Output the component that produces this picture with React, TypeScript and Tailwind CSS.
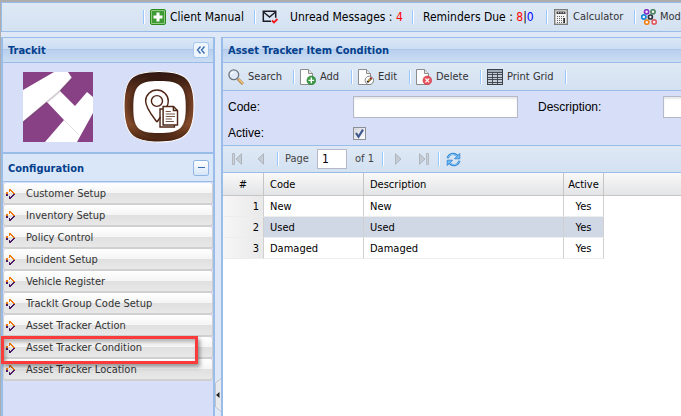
import { useState } from 'react';
import type { ReactNode } from 'react';

const menuItems = [
  'Customer Setup',
  'Inventory Setup',
  'Policy Control',
  'Incident Setup',
  'Vehicle Register',
  'TrackIt Group Code Setup',
  'Asset Tracker Action',
  'Asset Tracker Condition',
  'Asset Tracker Location',
];

const conditions = [
  { id: 1, code: 'New', description: 'New', active: 'Yes' },
  { id: 2, code: 'Used', description: 'Used', active: 'Yes' },
  { id: 3, code: 'Damaged', description: 'Damaged', active: 'Yes' },
];

/* ---------- icons ---------- */

function PlusIcon() {
  return (
    <svg className="w-4 h-4 shrink-0" viewBox="0 0 16 16">
      <rect x="0.5" y="0.5" width="15" height="15" rx="1.5" fill="#8fca80" stroke="#2a8a1c" />
      <rect x="2" y="2" width="12" height="12" fill="#3f9a35" />
      <path d="M6.5 3.5h3v3h3v3h-3v3h-3v-3h-3v-3h3z" fill="#fff" />
    </svg>
  );
}

function MailIcon() {
  return (
    <svg className="w-4 h-4 shrink-0" viewBox="0 0 16 16" fill="none">
      <path d="M9 12.2H1.3V2.3h12.4v6.4" stroke="#1c1c24" strokeWidth="1.5" />
      <path d="M1.5 3l6 5 6-5" stroke="#1c1c24" strokeWidth="1.4" />
      <path d="M10 11.5l2 2 3.5-3.5" stroke="#f01818" strokeWidth="1.8" />
    </svg>
  );
}

function CalculatorIcon() {
  return (
    <svg className="w-[14px] h-4 shrink-0" viewBox="0 0 14 16">
      <rect x="0.7" y="0.7" width="12.6" height="14.6" fill="#f4f4f4" stroke="#7d7d7d" strokeWidth="1.4" />
      <rect x="2.5" y="2.5" width="9" height="2.5" fill="#444" />
      <path d="M4 3.7h1M6.5 3.7h1M9 3.7h1" stroke="#ddd" />
      <path d="M3 7.5h8M3 9.5h8M3 11.5h8M3 13.5h8" stroke="#666" strokeDasharray="1 1" />
      <path d="M10.2 9v5" stroke="#222" strokeWidth="1.5" />
    </svg>
  );
}

function ModulesIcon() {
  return (
    <svg className="w-4 h-4 shrink-0" viewBox="0 0 16 16" fill="#f4f7fb" strokeWidth="1.7">
      <circle cx="5.6" cy="2.8" r="2.1" stroke="#8a2fc4" />
      <circle cx="12" cy="2.8" r="2.1" stroke="#4d8560" />
      <circle cx="2.8" cy="8" r="2.1" stroke="#1686d8" />
      <circle cx="13.2" cy="13" r="2.1" stroke="#e05a62" />
      <circle cx="5.8" cy="13.2" r="2.1" stroke="#f08418" />
      <circle cx="9.4" cy="8" r="2" stroke="#30343c" />
    </svg>
  );
}

function SearchIcon() {
  return (
    <svg className="w-4 h-4 shrink-0" viewBox="0 0 16 16" fill="none">
      <path d="M10 10l5 5" stroke="#a98352" strokeWidth="3" />
      <path d="M10.8 10.4l4.2 4.2" stroke="#f0c078" strokeWidth="1.5" />
      <circle cx="5.8" cy="5.8" r="4.9" fill="#dfe9f7" stroke="#6d7480" strokeWidth="1.3" />
      <path d="M3 5.5a3 3 0 0 1 2.5-2.7" stroke="#fff" strokeWidth="1.2" />
    </svg>
  );
}

function PageIcon({ children }: { children: ReactNode }) {
  return (
    <svg className="w-4 h-4 shrink-0" viewBox="0 0 16 16" fill="none">
      <path d="M0.5 0.5h8l4 4v11h-12z" fill="#fdfdfd" stroke="#808080" strokeWidth="0.9" />
      <path d="M8.5 0.5v4h4" fill="#e6e6e6" stroke="#808080" strokeWidth="0.9" />
      {children}
    </svg>
  );
}

function AddIcon() {
  return (
    <PageIcon>
      <circle cx="11.3" cy="11.4" r="4.4" fill="#3d9b48" stroke="#2c7c38" strokeWidth="0.6" />
      <path d="M11.3 8.6v5.6M8.5 11.4h5.6" stroke="#fff" strokeWidth="1.4" />
    </PageIcon>
  );
}

function EditIcon() {
  return (
    <PageIcon>
      <circle cx="11.3" cy="11.4" r="4.2" fill="#fff" stroke="#777" strokeWidth="0.9" />
      <path d="M9.3 13.4l4.2-4.4" stroke="#222" strokeWidth="2" />
      <path d="M10.2 12.2l2.2-2.3" stroke="#f0b030" strokeWidth="1.2" />
      <path d="M12.8 9.6l0.9-0.9" stroke="#d03030" strokeWidth="2" />
    </PageIcon>
  );
}

function DeleteIcon() {
  return (
    <PageIcon>
      <circle cx="11.3" cy="11.4" r="4.3" fill="#e8525c" stroke="#c83c48" strokeWidth="0.7" />
      <path d="M9.4 9.5l3.8 3.8M13.2 9.5l-3.8 3.8" stroke="#fff" strokeWidth="1.1" />
    </PageIcon>
  );
}

function GridIcon() {
  return (
    <svg className="w-4 h-4 shrink-0" viewBox="0 0 16 16">
      <rect x="0.5" y="0.5" width="15" height="15" fill="#c3ccd9" stroke="#3c4048" />
      <rect x="1" y="1" width="14" height="2.5" fill="#a0aab8" />
      <path d="M1 3.5h14M1 5.5h14M1 8.5h14M1 10.5h14M1 13.5h14M5.5 4v11M10.5 4v11" stroke="#3c4048" strokeWidth="0.9" />
    </svg>
  );
}

function ArrowIcon() {
  return (
    <svg className="w-[9px] h-3 shrink-0" viewBox="0 0 9 12" shapeRendering="crispEdges">
      <path d="M0 4h2v2H0zM3 1h2v1h1v1h1v1h1v1h1v1H7V5H6V4H5V3H4v1H3z" fill="#f0790c" />
      <path d="M0 6h2v2H0zM9 6v1H8v1H7v1H6v1H5v1H3V8h1v1h1V8h1V7h1V6z" fill="#4b1c66" />
    </svg>
  );
}

function PagerIcon({ back, edge }: { back?: boolean; edge?: boolean }) {
  return (
    <svg className={back ? 'w-3 h-3' : 'w-3 h-3 rotate-180'} viewBox="0 0 12 12">
      {edge && <path d="M1.5 0.5h2v11h-2z" fill="#ccd2da" stroke="#a8afb8" strokeWidth="0.8" />}
      <path d="M10.5 0.8v10.4L5 6z" fill="#c6ccd4" stroke="#a4abb5" strokeWidth="0.8" />
    </svg>
  );
}

function RefreshIcon() {
  return (
    <svg className="w-[15px] h-[15px]" viewBox="0 0 15 15" fill="none">
      <path d="M1.6 6.2C2.8 1.6 8 0.4 11.4 3.8" stroke="#2f86d6" strokeWidth="2.2" />
      <path d="M2 5.6C3.4 2 7.8 1.2 11 4" stroke="#a4d6fb" strokeWidth="0.9" />
      <path d="M13.8 1.4v5.4H8.4z" fill="#6fbcf5" stroke="#2f7fd0" strokeWidth="0.8" />
      <path d="M13.4 8.8c-1.2 4.6-6.4 5.8-9.8 2.4" stroke="#2f86d6" strokeWidth="2.2" />
      <path d="M13 9.4c-1.4 3.6-5.8 4.4-9 1.6" stroke="#a4d6fb" strokeWidth="0.9" />
      <path d="M1.2 13.6V8.2h5.4z" fill="#6fbcf5" stroke="#2f7fd0" strokeWidth="0.8" />
    </svg>
  );
}

function CompanyLogo() {
  return (
    <svg className="w-[70px] h-[70px]" viewBox="0 0 70 70">
      <rect width="70" height="70" fill="#884185" />
      <path d="M0 18L31 0h14l4 6L37 19l15 15 12-14 6 5v16L54 70H22l19-22-17-18L0 50z" fill="#fff" />
      <path d="M24 30l13-11" stroke="#d4d0d6" strokeWidth="2" />
      <path d="M41 48l14 14" stroke="#e2dfe4" />
      <path d="M49 6L37 19M24 30L0 50" stroke="#61305f" strokeWidth="1.2" opacity="0.6" />
    </svg>
  );
}

function LocationLogo() {
  return (
    <svg className="w-[72px] h-[74px]" viewBox="1 0 70 74" preserveAspectRatio="none" fill="none">
      <defs>
        <linearGradient id="frame" x1="0" y1="0" x2="0" y2="1">
          <stop offset="0" stopColor="#2c1610" />
          <stop offset="0.35" stopColor="#6d3b22" />
          <stop offset="0.75" stopColor="#824a2a" />
          <stop offset="1" stopColor="#43200f" />
        </linearGradient>
        <radialGradient id="glow">
          <stop offset="0.65" stopColor="#140805" />
          <stop offset="1" stopColor="#140805" stopOpacity="0" />
        </radialGradient>
      </defs>
      <path d="M36 1.5C62 1.5 70 9 70 36S62 72 36 72 2 64 2 36 10 1.5 36 1.5z" fill="url(#frame)" stroke="#fff" />
      <ellipse cx="36" cy="37" rx="32" ry="32" fill="url(#glow)" opacity="0.7" />
      <path d="M36 11C57 11 62 16 62 37S57 63 36 63 11 58 11 37s5-26 25-26z" fill="#fff" />
      <g stroke="#4f2616" strokeWidth="1.4">
        <path d="M34 52C29 45 23 38 23 31c0-6 5-11 11-11s11 5 11 11c0 2-0.5 4-1.3 5.5" />
        <path d="M34 52l3.5-5" />
        <circle cx="34" cy="31" r="5.4" />
        <path d="M40 36.5h10l4 4V55H40z" fill="#fff" />
        <path d="M50 36.5v4h4M40 39h-3v18h14v-2" />
      </g>
      <path d="M42.5 41.5h5M42.5 44h9M42.5 46.5h9M42.5 49h6M42.5 51.5h8" stroke="#6b4636" strokeWidth="0.9" />
    </svg>
  );
}

/* ---------- building blocks ---------- */

function Separator() {
  return <span className="w-[2px] h-[14px] shrink-0 bg-[#98c8ff] border-r border-white" />;
}

function PanelHeader({ title, children }: { title: string; children?: ReactNode }) {
  return (
    <div className="h-[26px] shrink-0 flex items-center justify-between px-[5px] border-t border-b border-[#99bce8] bg-[linear-gradient(#dae7f6,#cddef3_45%,#abc7ec_46%,#abc7ec_50%,#b8cfee_51%,#cbddf3)]">
      <h2 className="pt-0.5 font-bold text-[#04408c] whitespace-nowrap">{title}</h2>
      {children}
    </div>
  );
}

function TopItem({ width, children }: { width: string; children: ReactNode }) {
  return (
    <div className={`${width} shrink-0 flex items-center whitespace-nowrap`}>
      <Separator />
      {children}
    </div>
  );
}

function ToolButton({ width, icon, label }: { width: string; icon: ReactNode; label: string }) {
  return (
    <div className={`${width} shrink-0 flex items-center justify-between`}>
      <button className="flex items-center gap-1 whitespace-nowrap text-[#333]">
        {icon}
        {label}
      </button>
      <Separator />
    </div>
  );
}

function TopBar() {
  return (
    <header className="h-[30px] shrink-0 flex items-center pl-[141px] border border-r-0 border-[#99bce8] bg-linear-to-b from-[#dfe9f5] to-[#d3e1f1] text-[12px] text-black overflow-hidden">
      <TopItem width="w-[111px]">
        <a href="#manual" className="flex items-center gap-1 ml-[5px]">
          <PlusIcon />
          Client Manual
        </a>
      </TopItem>
      <TopItem width="w-[158px]">
        <a href="#messages" className="flex items-center gap-3 ml-[6px]">
          <MailIcon />
          <span>
            Unread Messages : <span className="text-[#ff0000]">4</span>
          </span>
        </a>
      </TopItem>
      <TopItem width="w-[134px]">
        <a href="#reminders" className="ml-[9px]">
          Reminders Due : <span className="text-[#ff0000]">8</span>|<span className="text-[#0000ff]">0</span>
        </a>
      </TopItem>
      <TopItem width="w-[88px]">
        <button className="flex items-center gap-[5px] ml-[6px] text-[11px] text-[#333]">
          <CalculatorIcon />
          Calculator
        </button>
      </TopItem>
      <div className="shrink-0 flex items-center">
        <Separator />
        <button className="flex items-center gap-[3px] ml-[5px] text-[11px] text-[#333]">
          <ModulesIcon />
          Mod
        </button>
      </div>
    </header>
  );
}

function Sidebar() {
  const [open, setOpen] = useState(true);

  return (
    <aside className="w-[214px] shrink-0 flex flex-col border-x-2 border-[#99bce8] bg-[#d7def8]">
      <PanelHeader title="Trackit">
        <button aria-label="Collapse panel" className="w-[14px] h-[14px] rounded-xs bg-[#eef5fd] ring-1 ring-[#a9c8ee] flex items-center justify-center">
          <svg className="w-[10px] h-[10px]" viewBox="0 0 10 10" fill="none" stroke="#3d6fae" strokeWidth="1.4">
            <path d="M4.5 1.5L1.5 5l3 3.5M8.5 1.5L5.5 5l3 3.5" />
          </svg>
        </button>
      </PanelHeader>
      <div className="h-[89px] shrink-0 flex items-center justify-between pl-5 pr-[18px] pb-0.5">
        <CompanyLogo />
        <LocationLogo />
      </div>
      <div className="h-[30px] shrink-0 flex items-center justify-between px-[5px] border-t-2 border-b border-[#99bce8] bg-[#d9e7f8]">
        <h2 className="pt-0.5 font-bold text-[#04408c]">Configuration</h2>
        <button
          onClick={() => setOpen(!open)}
          aria-label="Toggle configuration"
          className="w-[14px] h-[14px] rounded-xs bg-linear-to-b from-white to-[#d5e5f8] ring-1 ring-[#8fb4e4] flex items-center justify-center"
        >
          <span className="w-[7px] h-px bg-[#3d6fae]" />
        </button>
      </div>
      {open && (
        <nav className="flex flex-col pt-px">
          {menuItems.map((item) => (
            <a
              key={item}
              href="#menu"
              className="relative h-[22px] pt-0.5 flex items-center gap-[11px] pl-0.5 rounded-[3px] border-x border-b-2 border-[#d0d0d0] bg-[linear-gradient(#fff,#f5f5f5_48%,#e0e0e0_50%,#e8e8e8)] text-[#333]"
            >
              <ArrowIcon />
              {item}
              {item === 'Asset Tracker Condition' && (
                <span className="absolute z-10 -left-[3px] -top-px w-[197px] h-[28px] border-3 border-[#f93b3b] shadow-[2px_3px_4px_rgba(0,0,0,0.4),inset_2px_3px_4px_rgba(0,0,0,0.3)]" />
              )}
            </a>
          ))}
        </nav>
      )}
    </aside>
  );
}

function ConditionForm() {
  return (
    <form className="shrink-0 h-[55px] pt-[5px] pl-[5px] bg-[#d7def8] border-b border-[#99bce8] font-['Liberation_Sans',sans-serif] text-[12px] text-black overflow-hidden">
      <div className="flex items-center">
        <label htmlFor="code" className="w-[125px] shrink-0">Code:</label>
        <input id="code" className="w-[165px] h-[22px] shrink-0 px-1 bg-white border border-[#b5b8c8] shadow-[inset_0_2px_2px_#e8e8e8]" />
        <label htmlFor="description" className="w-[125px] shrink-0 ml-5">Description:</label>
        <input id="description" className="w-[165px] h-[22px] shrink-0 px-1 bg-white border border-[#b5b8c8] shadow-[inset_0_2px_2px_#e8e8e8]" />
      </div>
      <div className="flex items-center h-[22px] mt-1">
        <label htmlFor="active" className="w-[125px] shrink-0">Active:</label>
        <span className="relative w-[13px] h-[13px]">
          <input
            id="active"
            type="checkbox"
            defaultChecked
            className="peer block appearance-none w-[13px] h-[13px] border border-[#8a8f98] bg-linear-to-br from-[#d3d6dc] to-white"
          />
          <svg className="absolute inset-0 w-[13px] h-[13px] pointer-events-none hidden peer-checked:block" viewBox="0 0 13 13" fill="none">
            <path d="M3 6l2.5 3.8L10 2.6" stroke="#40588f" strokeWidth="2.2" />
          </svg>
        </span>
      </div>
    </form>
  );
}

function Pager() {
  const [page, setPage] = useState('1');

  return (
    <div className="h-[27px] shrink-0 flex items-center pl-2 border-b border-[#99bce8] bg-linear-to-b from-[#dfe9f5] to-[#d3e1f1] text-[#444]">
      <button aria-label="First page"><PagerIcon back edge /></button>
      <button aria-label="Previous page" className="ml-[10px] mr-3"><PagerIcon back /></button>
      <Separator />
      <label htmlFor="page" className="w-[38px] pl-[6px]">Page</label>
      <input
        id="page"
        value={page}
        onChange={(e) => setPage(e.target.value)}
        className="w-[30px] h-5 px-1 bg-white border border-[#b5b8c8] text-[12px] text-black"
      />
      <span className="w-[35px] pl-2">of 1</span>
      <Separator />
      <button aria-label="Next page" className="ml-[10px] mr-3"><PagerIcon /></button>
      <button aria-label="Last page" className="mr-2"><PagerIcon edge /></button>
      <Separator />
      <button aria-label="Refresh" className="ml-[6px]"><RefreshIcon /></button>
    </div>
  );
}

function HeadCell({ children, left }: { children?: ReactNode; left?: boolean }) {
  return (
    <th
      className={`px-0 pb-0 pt-px font-normal border-r border-b border-[#c5c5c5] last:border-r-0 bg-linear-to-b from-[#f9f9f9] to-[#e3e4e6] ${left ? 'text-left' : 'text-center'}`}
    >
      <span className={left ? 'pl-[6px]' : undefined}>{children}</span>
    </th>
  );
}

function ConditionGrid() {
  const cell = 'px-0 pb-0 pt-0.5 leading-4 border-r border-b border-r-[#d0d0d0] border-b-[#ededed]';

  return (
    <div className="flex-1 bg-white text-black">
      <table className="table-fixed w-full border-separate border-spacing-0">
        <colgroup>
          <col className="w-[41px]" />
          <col className="w-[100px]" />
          <col className="w-[200px]" />
          <col className="w-[40px]" />
          <col />
        </colgroup>
        <thead>
          <tr className="h-[23px]">
            <HeadCell>#</HeadCell>
            <HeadCell left>Code</HeadCell>
            <HeadCell left>Description</HeadCell>
            <HeadCell>Active</HeadCell>
            <HeadCell />
          </tr>
        </thead>
        <tbody>
          {conditions.map((row) => (
            <tr key={row.id} className={row.code === 'Used' ? 'h-[21px] *:bg-[#d1d8e5]' : 'h-[21px]'}>
              <td className={`${cell} text-right bg-[#f0f0f0]! bg-linear-to-r from-[#f6f6f6] to-[#e9e9e9]`}>
                <span className="pr-1">{row.id}</span>
              </td>
              <td className={cell}><span className="pl-[6px]">{row.code}</span></td>
              <td className={cell}><span className="pl-[6px]">{row.description}</span></td>
              <td className={`${cell} text-center`}>{row.active}</td>
              <td className="p-0 bg-white!" />
            </tr>
          ))}
        </tbody>
      </table>
    </div>
  );
}

export default function App() {
  return (
    <div className="h-screen flex flex-col overflow-hidden border-l border-t-2 border-[#adadad] bg-[#dfe8f6] font-['DejaVu_Sans_Condensed','DejaVu_Sans',sans-serif] text-[11px] leading-4">
      <TopBar />
      <div className="flex-1 min-h-0 flex pt-[5px]">
        <Sidebar />
        <div className="w-[6px] shrink-0 flex flex-col justify-end pb-1">
          <button aria-label="Collapse sidebar" className="h-[34px] flex items-center justify-center">
            <svg className="w-[6px] h-[34px]" viewBox="0 0 6 34">
              <path d="M6 0.5L0.5 5v24L6 33.5" fill="#e8eaee" stroke="#c0c4cc" />
              <path d="M4.5 14v6L1 17z" fill="#222" />
            </svg>
          </button>
        </div>
        <main className="flex-1 min-w-0 flex flex-col border-l-2 border-[#99bce8] overflow-hidden">
          <PanelHeader title="Asset Tracker Item Condition" />
          <div className="h-[28px] shrink-0 flex items-center gap-[5px] pl-[5px] border-b border-[#99bce8] bg-linear-to-b from-[#dfe9f5] to-[#d3e1f1]">
            <ToolButton width="w-[67px]" icon={<SearchIcon />} label="Search" />
            <ToolButton width="w-[53px]" icon={<AddIcon />} label="Add" />
            <ToolButton width="w-[53px]" icon={<EditIcon />} label="Edit" />
            <ToolButton width="w-[66px]" icon={<DeleteIcon />} label="Delete" />
            <ToolButton width="w-[80px]" icon={<GridIcon />} label="Print Grid" />
          </div>
          <ConditionForm />
          <Pager />
          <ConditionGrid />
        </main>
      </div>
    </div>
  );
}
